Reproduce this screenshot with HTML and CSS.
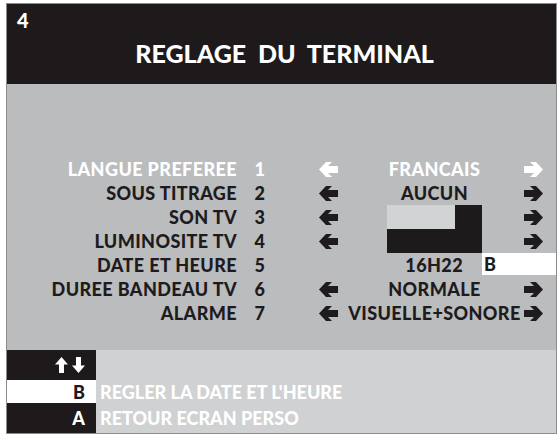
FILE: index.html
```html
<!DOCTYPE html>
<html lang="fr">
<head>
<meta charset="utf-8">
<title>Réglage du terminal</title>
<link rel="stylesheet" href="styles.css">
</head>
<body>
<div class="frame">
  <header class="header">
    <div class="page-num">4</div>
    <h1 class="title">REGLAGE&nbsp; DU&nbsp; TERMINAL</h1>
  </header>
  <main class="main">
    <div class="menu">
      <div class="lbl sel">LANGUE PREFEREE</div><div class="idx sel">1</div>
      <div class="la sel"><svg class="arr" viewBox="0 0 19 15"><path d="M0 7.5L7 0H13L9 4H19V11H9L13 15H7Z"/></svg></div>
      <div class="val sel">FRANCAIS</div>
      <div class="ra sel"><svg class="arr" viewBox="0 0 19 15"><path d="M19 7.5L12 0H6L10 4H0V11H10L6 15H12Z"/></svg></div>

      <div class="lbl">SOUS TITRAGE</div><div class="idx">2</div>
      <div class="la"><svg class="arr" viewBox="0 0 19 15"><path d="M0 7.5L7 0H13L9 4H19V11H9L13 15H7Z"/></svg></div>
      <div class="val">AUCUN</div>
      <div class="ra"><svg class="arr" viewBox="0 0 19 15"><path d="M19 7.5L12 0H6L10 4H0V11H10L6 15H12Z"/></svg></div>

      <div class="lbl">SON TV</div><div class="idx">3</div>
      <div class="la"><svg class="arr" viewBox="0 0 19 15"><path d="M0 7.5L7 0H13L9 4H19V11H9L13 15H7Z"/></svg></div>
      <div class="val"><div class="bar"><div class="bar-fill" style="width:68px"></div></div></div>
      <div class="ra"><svg class="arr" viewBox="0 0 19 15"><path d="M19 7.5L12 0H6L10 4H0V11H10L6 15H12Z"/></svg></div>

      <div class="lbl">LUMINOSITE TV</div><div class="idx">4</div>
      <div class="la"><svg class="arr" viewBox="0 0 19 15"><path d="M0 7.5L7 0H13L9 4H19V11H9L13 15H7Z"/></svg></div>
      <div class="val"><div class="bar"><div class="bar-fill" style="width:0px"></div></div></div>
      <div class="ra"><svg class="arr" viewBox="0 0 19 15"><path d="M19 7.5L12 0H6L10 4H0V11H10L6 15H12Z"/></svg></div>

      <div class="lbl">DATE ET HEURE</div><div class="idx">5</div>
      <div class="la"></div>
      <div class="time-cell"><span class="time">16H22</span><span class="hint">B</span></div>

      <div class="lbl">DUREE BANDEAU TV</div><div class="idx">6</div>
      <div class="la"><svg class="arr" viewBox="0 0 19 15"><path d="M0 7.5L7 0H13L9 4H19V11H9L13 15H7Z"/></svg></div>
      <div class="val">NORMALE</div>
      <div class="ra"><svg class="arr" viewBox="0 0 19 15"><path d="M19 7.5L12 0H6L10 4H0V11H10L6 15H12Z"/></svg></div>

      <div class="lbl">ALARME</div><div class="idx">7</div>
      <div class="la"><svg class="arr" viewBox="0 0 19 15"><path d="M0 7.5L7 0H13L9 4H19V11H9L13 15H7Z"/></svg></div>
      <div class="val">VISUELLE+SONORE</div>
      <div class="ra"><svg class="arr" viewBox="0 0 19 15"><path d="M19 7.5L12 0H6L10 4H0V11H10L6 15H12Z"/></svg></div>
    </div>
  </main>
  <footer class="keys">
    <div class="key key-dark">
      <svg class="ud" viewBox="0 0 13 16"><path d="M6.5 0L13 7.5H9V16H4V7.5H0Z"/></svg>
      <svg class="ud" viewBox="0 0 13 16"><path d="M6.5 16L13 8.5H9V0H4V8.5H0Z"/></svg>
    </div>
    <div class="act"></div>
    <div class="key key-light">B</div>
    <div class="act">REGLER LA DATE ET L'HEURE</div>
    <div class="key key-dark">A</div>
    <div class="act">RETOUR ECRAN PERSO</div>
  </footer>
</div>
</body>
</html>
```
FILE: styles.css
```css
html, body {
  margin: 0;
  padding: 0;
  background: #ffffff;
}
body {
  font-family: Lato, "Liberation Sans", sans-serif;
  font-weight: 900;
}
.frame {
  margin: 3px 0 0 6px;
  width: 549px;
  border: 1px solid #8c8c8c;
  background: #bbbcbe;
}
.header {
  height: 80px;
  box-sizing: border-box;
  background: #1e1a1b;
  color: #ffffff;
  padding-top: 6px;
}
.page-num {
  font-size: 20px;
  line-height: 20px;
  padding-left: 10px;
}
.title {
  margin: 11px 0 0 0;
  font-size: 25px;
  line-height: 24px;
  font-weight: 900;
  text-align: center;
  padding-left: 6px;
}
.main {
  height: 266px;
  box-sizing: border-box;
  padding-top: 73px;
  color: #1d1b1d;
}
.menu {
  display: grid;
  grid-template-columns: 230px 46px 62px 179px 32px;
  grid-auto-rows: 24px;
  font-size: 18px;
  line-height: 24px;
  letter-spacing: 0.4px;
}
.lbl {
  text-align: right;
  white-space: nowrap;
}
.idx {
  text-align: center;
}
.la {
  display: flex;
  align-items: center;
  justify-content: flex-end;
  padding-right: 7px;
}
.ra {
  display: flex;
  align-items: center;
  justify-content: flex-start;
}
.val {
  display: flex;
  align-items: center;
  justify-content: center;
  white-space: nowrap;
}
.arr {
  width: 19px;
  height: 15px;
  fill: #1d1b1d;
}
.sel {
  color: #ffffff;
}
.sel .arr {
  fill: #ffffff;
}
.bar {
  width: 95px;
  height: 24px;
  background: #1d1a1c;
  display: flex;
}
.bar-fill {
  height: 100%;
  background: #d2d3d5;
}
.time-cell {
  grid-column: 4 / span 2;
  display: flex;
  align-items: stretch;
}
.time {
  width: 137px;
  text-align: right;
  padding-right: 19px;
  box-sizing: border-box;
}
.hint {
  flex: 1;
  background: #ffffff;
  height: 22px;
  line-height: 22px;
  padding-left: 2px;
  color: #1d1b1d;
}
.keys {
  display: grid;
  grid-template-columns: 89px 1fr;
  grid-template-rows: 30px 23px 30px;
  background: #d0d1d3;
  font-size: 18px;
}
.key {
  display: flex;
  align-items: center;
  justify-content: flex-end;
  padding-right: 11px;
}
.key-dark {
  background: #1e1a1b;
  color: #ffffff;
}
.key-light {
  background: #ffffff;
  color: #1d1b1d;
}
.act {
  display: flex;
  align-items: center;
  padding-left: 4px;
  color: #ffffff;
}
.ud {
  width: 13px;
  height: 16px;
  fill: #ffffff;
  margin-left: 4px;
}
```
